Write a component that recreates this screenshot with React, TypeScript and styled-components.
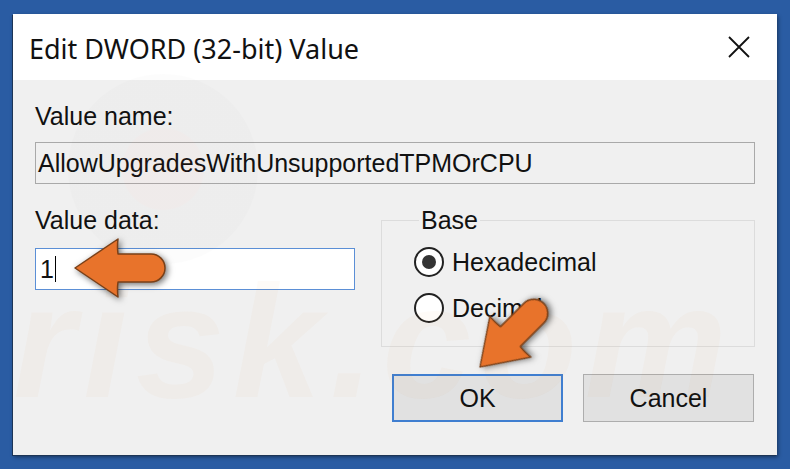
import React from 'react';
import styled, { createGlobalStyle } from 'styled-components';

const GlobalStyle = createGlobalStyle`
  html, body {
    margin: 0;
    padding: 0;
    background: #2a5ca3;
  }
  body {
    width: 790px;
    height: 469px;
    overflow: hidden;
    font-family: "Liberation Sans", Arial, sans-serif;
  }
`;

const Page = styled.div`
  position: relative;
  width: 790px;
  height: 469px;
  padding: 14px 0 0 13px;
  box-sizing: border-box;
`;

const Dialog = styled.div`
  position: relative;
  width: 764px;
  height: 441px;
  display: flex;
  flex-direction: column;
  background: #f0f0f0;
  box-shadow: -1px 1px 0 #1d3556, 1px 2px 4px rgba(0, 0, 0, 0.45);
  overflow: hidden;
`;

const TitleBar = styled.div`
  height: 66px;
  flex: none;
  display: flex;
  align-items: center;
  justify-content: space-between;
  background: #ffffff;
  padding: 0 26px 0 16px;
`;

const Title = styled.div`
  font-family: "Noto Sans", "Open Sans", sans-serif;
  font-size: 27px;
  color: #111;
  padding-top: 2px;
`;

const Close = styled.svg`
  width: 24px;
  height: 24px;
  display: block;
`;

const Body = styled.div`
  flex: 1;
  padding: 22px 22px 0 22px;
  display: flex;
  flex-direction: column;
`;

const Label = styled.div`
  font-size: 25px;
  color: #111;
  line-height: 28px;
`;

const NameField = styled.div`
  margin-top: 12px;
  height: 42px;
  box-sizing: border-box;
  border: 1px solid #a9a9a9;
  background: #f0f0f0;
  display: flex;
  align-items: center;
  padding: 0 2px;
  font-size: 25px;
  color: #111;
`;

const Columns = styled.div`
  display: grid;
  grid-template-columns: 320px 1fr;
  column-gap: 26px;
  margin-top: 22px;
`;

const LeftCol = styled.div`
  display: flex;
  flex-direction: column;
`;

const DataInput = styled.div`
  margin-top: 14px;
  height: 42px;
  box-sizing: border-box;
  border: 1px solid #5b8fd6;
  background: #fff;
  display: flex;
  align-items: center;
  padding: 0 4px;
  font-size: 25px;
  color: #111;
`;

const Caret = styled.span`
  display: inline-block;
  width: 1px;
  height: 26px;
  background: #000;
  margin-left: 1px;
`;

const GroupBox = styled.fieldset`
  margin: 1px 0 0 0;
  height: 140px;
  box-sizing: border-box;
  border: 1px solid #dcdcdc;
  padding: 14px 0 0 32px;
  display: flex;
  flex-direction: column;
  gap: 16px;
  min-width: 0;
`;

const Legend = styled.legend`
  font-size: 25px;
  color: #111;
  padding: 0 2px;
  margin-left: 5px;
  line-height: 26px;
`;

const Radio = styled.div`
  display: flex;
  align-items: center;
  gap: 8px;
  font-size: 25px;
  color: #111;
`;

const RadioCircle = styled.span<{ $checked?: boolean }>`
  width: 30px;
  height: 30px;
  box-sizing: border-box;
  border-radius: 50%;
  border: 2.5px solid #222;
  background: #fff;
  display: flex;
  align-items: center;
  justify-content: center;
  &::after {
    content: '';
    width: 14px;
    height: 14px;
    border-radius: 50%;
    background: ${(p) => (p.$checked ? '#333' : 'transparent')};
  }
`;

const Buttons = styled.div`
  display: flex;
  justify-content: flex-end;
  gap: 20px;
  margin-top: 27px;
  padding-right: 1px;
`;

const Button = styled.div<{ $default?: boolean }>`
  width: 171px;
  height: 48px;
  box-sizing: border-box;
  background: #e1e1e1;
  border: ${(p) => (p.$default ? '2px solid #3f7ed0' : '1px solid #adadad')};
  display: flex;
  align-items: center;
  justify-content: center;
  font-size: 25px;
  color: #111;
`;

const Watermark = styled.div`
  position: absolute;
  inset: 0;
  pointer-events: none;
  font-family: "Liberation Sans", Arial, sans-serif;
  font-weight: bold;
  font-style: italic;
`;

const WatermarkCircle = styled.div`
  position: absolute;
  left: 55px;
  top: 60px;
  width: 190px;
  height: 190px;
  border-radius: 50%;
  background: radial-gradient(circle, rgba(220, 80, 60, 0.03) 0 30%, rgba(0, 0, 0, 0.012) 31%);
`;

const WatermarkRisk = styled.div`
  position: absolute;
  left: 0px;
  top: 236px;
  font-size: 160px;
  letter-spacing: 8px;
  color: rgba(235, 130, 60, 0.035);
`;

const ArrowSvg = styled.svg`
  position: absolute;
  width: 120px;
  height: 100px;
  overflow: visible;
  transform-origin: 10px 50px;
  filter: drop-shadow(2px 2px 3px rgba(0, 0, 0, 0.55));
`;

const Arrow: React.FC<{ x: number; y: number; angle: number }> = ({ x, y, angle }) => (
  <ArrowSvg
    viewBox="0 0 120 100"
    style={{ left: x - 10, top: y - 50, transform: `rotate(${angle}deg)` }}
  >
    <path
      d="M10 50 L53 21 Q52 29 53 36 L86 36 A14 14 0 0 1 86 64 L53 64 Q52 71 53 79 Z"
      fill="#e8732b"
      stroke="#7a4018"
      strokeWidth="1.5"
      strokeLinejoin="round"
    />
  </ArrowSvg>
);

const App: React.FC = () => (
  <>
    <GlobalStyle />
    <Page>
      <Dialog>
        <TitleBar>
          <Title>Edit DWORD (32-bit) Value</Title>
          <Close viewBox="0 0 24 24">
            <path d="M2 2 L22 22 M22 2 L2 22" stroke="#111" strokeWidth="1.8" />
          </Close>
        </TitleBar>
        <Body>
          <Label>Value name:</Label>
          <NameField>AllowUpgradesWithUnsupportedTPMOrCPU</NameField>
          <Columns>
            <LeftCol>
              <Label>Value data:</Label>
              <DataInput>
                1<Caret />
              </DataInput>
            </LeftCol>
            <GroupBox>
              <Legend>Base</Legend>
              <Radio>
                <RadioCircle $checked />
                Hexadecimal
              </Radio>
              <Radio>
                <RadioCircle />
                Decimal
              </Radio>
            </GroupBox>
          </Columns>
          <Buttons>
            <Button $default>OK</Button>
            <Button>Cancel</Button>
          </Buttons>
        </Body>
        <Watermark>
          <WatermarkCircle />
          <WatermarkRisk>risk.com</WatermarkRisk>
        </Watermark>
      </Dialog>
      <Arrow x={75} y={268} angle={0} />
      <Arrow x={480} y={367} angle={-45} />
    </Page>
  </>
);

export default App;
